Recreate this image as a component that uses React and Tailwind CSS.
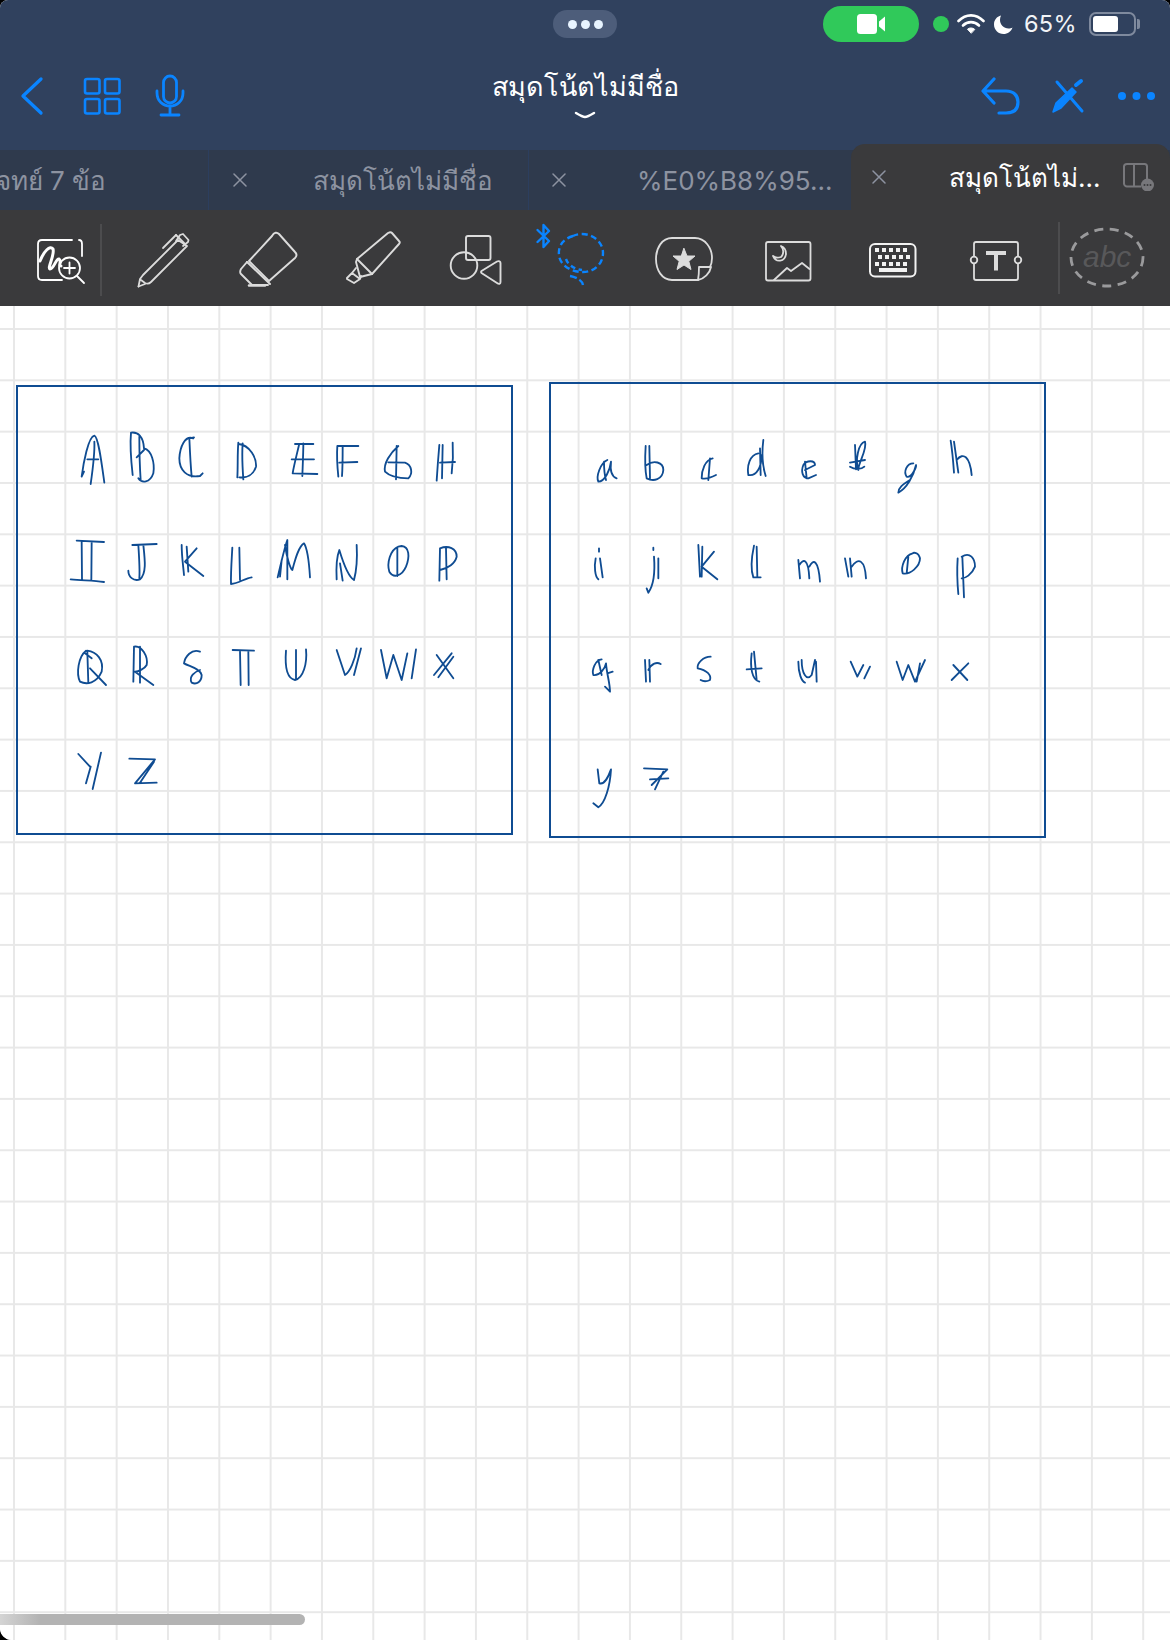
import React from "react";

const Ic = ({ x, y, w, h, className = "", children }) => (
  <svg viewBox={`${x} ${y} ${w} ${h}`} width={w} height={h} className={"block shrink-0 " + className} fill="none" strokeLinecap="round" strokeLinejoin="round">
    {children}
  </svg>
);

const TabX = ({ c = "#8d93a1" }) => (
  <svg viewBox="0 0 14 14" width="14" height="14" className="block shrink-0" fill="none" stroke={c} strokeWidth="1.5" strokeLinecap="round">
    <path d="M1 1L13 13M13 1L1 13" />
  </svg>
);

const UPPER = [
  "M245 320C250 280 265 200 283 197C295 200 305 280 313 338M272 342C278 300 285 250 283 215M262 268L295 268M245 320L252 305",
  "M398 315C393 270 390 220 393 188C415 185 430 200 432 235C455 240 465 280 460 310C450 340 425 340 415 325M418 200C418 250 420 300 422 330M410 262L432 240",
  "M580 205C555 195 540 230 538 265C538 300 560 325 600 318L608 310M568 205C570 250 572 290 575 320M568 205L582 202",
  "M715 218C712 250 714 290 712 322M728 220C725 260 728 300 730 328M715 222C750 225 770 265 768 290C760 315 740 325 718 322",
  "M885 222L940 222M897 225C890 255 882 285 878 310L952 312M875 268L942 268M910 220C910 250 908 290 907 318",
  "M1015 320C1012 290 1010 255 1012 228L1075 228M1028 228C1028 260 1028 290 1026 318M1018 278L1072 276",
  "M1195 228C1170 250 1150 280 1155 305C1170 320 1200 325 1225 325C1240 310 1235 285 1215 278L1165 277M1190 228L1188 328",
  "M1318 225C1315 260 1312 300 1310 332M1328 225L1326 325M1358 218C1360 250 1358 285 1355 310M1320 278L1365 276",
  "M230 512L312 516M245 515L246 628M275 515L274 630M212 628C250 632 280 630 312 636",
  "M397 525L470 522M430 525C435 570 440 610 420 628C400 635 385 620 385 602M415 525C418 570 420 600 418 625",
  "M545 525C545 560 550 590 552 615M560 530L565 605M590 535L555 575L610 618",
  "M697 533C695 570 692 610 693 642C715 640 735 625 755 622M718 533L720 630",
  "M833 622C845 570 855 530 862 510L862 628M855 525C860 560 870 595 877 600C885 570 895 530 912 520C925 540 928 590 930 622M845 570L840 620",
  "M1010 628C1008 590 1010 560 1018 540C1030 580 1045 620 1062 630C1070 600 1072 560 1070 525M1020 580L1028 632",
  "M1195 530C1170 540 1160 580 1168 605C1180 625 1205 620 1218 590C1230 560 1228 530 1205 528L1195 530M1192 535L1192 618",
  "M1318 632L1320 535C1345 525 1370 535 1370 560C1365 580 1345 595 1320 600M1338 535L1340 628",
  "M258 842C235 860 228 910 240 935C260 945 290 940 305 905C312 870 290 845 262 842M262 845L265 940M270 895L318 945M255 850L275 865",
  "M400 935L402 830C425 825 445 860 440 885C435 895 415 905 405 905L460 945M420 830L420 938",
  "M600 845C575 835 555 860 552 880C570 890 600 895 605 915C605 935 590 945 575 938C565 920 585 905 600 900",
  "M698 840L762 842M720 842L722 945M745 842L746 945",
  "M858 842C855 880 858 925 885 930C910 925 922 880 918 838M888 840L888 928",
  "M1010 840L1035 915C1050 905 1065 870 1070 835M1083 835L1062 915",
  "M1143 840L1160 925L1180 855L1205 930L1222 850M1248 838L1235 925",
  "M1310 855L1360 925M1355 850L1302 915M1360 860L1315 922",
  "M235 1152L270 1190M272 1190L258 1240M303 1148L278 1257",
  "M388 1166L465 1168L405 1240L470 1238M462 1175L420 1238",
];

const LOWER = [
  "M232 270C210 280 198 320 205 335C225 335 240 300 243 275C240 300 245 320 260 325M222 275C222 300 225 320 228 330",
  "M347 228C345 260 345 300 350 325C370 335 398 330 400 300C400 275 370 270 350 285M358 228L360 325",
  "M548 265C525 270 515 300 515 325C530 328 545 322 558 315M540 265L535 330",
  "M685 250C660 255 650 285 655 315C680 320 695 290 695 255M700 210C695 250 698 290 707 318M690 235L692 315",
  "M825 300L855 285C855 270 830 270 820 285C812 305 818 325 835 325L858 315M825 275L830 325",
  "M985 300C975 270 985 220 1005 215C1012 235 990 270 985 295M960 278L1005 270M960 290C975 300 995 298 1003 290M975 225L978 298",
  "M1150 280C1130 280 1120 305 1130 320C1145 325 1160 290 1158 285C1150 320 1130 355 1105 368C1105 350 1125 340 1140 330",
  "M1262 212C1268 250 1270 280 1272 308M1272 215L1285 308M1280 270C1300 245 1320 260 1325 315",
  "M197 565C192 590 195 620 205 628M210 565L218 622M207 535L207 545",
  "M370 533L370 540M372 560C375 600 375 640 355 668L350 655M385 565L385 625",
  "M505 525L510 620M517 530L515 620M552 545L515 590L562 628",
  "M672 527C665 560 662 600 670 622L692 622M680 530L682 620",
  "M805 570L810 625M808 585C820 565 835 565 838 625M838 590C850 565 865 570 870 635",
  "M945 565L955 620M960 565L965 620M965 590C985 560 1005 570 1008 625",
  "M1148 550C1125 555 1112 590 1118 610C1140 615 1170 590 1170 565C1165 545 1150 548 1148 550M1135 560L1130 610",
  "M1283 565C1280 610 1283 650 1285 672M1297 560L1302 682M1295 560C1320 545 1335 565 1335 590C1325 615 1305 625 1295 625",
  "M215 868C195 870 185 900 190 915C210 918 225 895 228 880C230 910 240 940 240 965L225 950M205 870L215 915M232 910L248 905",
  "M345 870L348 935M358 870L360 935M355 900C365 880 380 875 392 882",
  "M542 860C520 860 500 880 503 895C530 900 545 915 540 930C530 935 520 935 512 930",
  "M665 850C660 890 665 930 688 935M672 845L680 930M650 898L695 895",
  "M805 875C805 910 815 935 825 938M815 870C815 910 830 935 845 915L855 870M858 875L860 935",
  "M962 875L982 920L1000 885M1020 890L1003 925",
  "M1100 875L1118 930L1135 885L1155 935L1185 870M1170 880L1160 935",
  "M1270 885L1312 930M1315 880L1270 925M1305 890L1265 930",
  "M203 1198L208 1240C225 1245 235 1220 243 1198C240 1250 225 1300 205 1312L190 1300",
  "M342 1195L412 1198L365 1245M360 1228L415 1225M400 1205L375 1258",
];

const Ink = ({ paths, className }) => (
  <svg viewBox="0 0 1560 1440" width="520" height="480" className={"absolute block " + className} fill="none" stroke="#0f4c92" strokeWidth="5.5" strokeLinecap="round" strokeLinejoin="round">
    {paths.map((d, i) => (
      <path key={i} d={d} />
    ))}
  </svg>
);

const FONT = "font-['Inter','Noto_Sans','DejaVu_Sans',sans-serif]";
const LIGHT = "#dcdcdc";
const BLUE = "#0a84ff";

export default function App() {
  return (
    <div className="w-[1170px] h-[1640px] bg-black overflow-hidden">
      <div className={"w-full h-full flex flex-col overflow-hidden rounded-tl-[8px] rounded-tr-[8px] rounded-bl-[12px] bg-white " + FONT}>
        {/* Header */}
        <header className="bg-[#30415e] h-[150px] shrink-0">
          <div className="h-[48px] flex items-center pl-[553px]">
            <div className="w-[64px] h-[28px] rounded-full bg-[#4d5d7a] flex items-center justify-center gap-[4px]">
              <span className="w-[9px] h-[9px] rounded-full bg-[#e8f4ff]" />
              <span className="w-[9px] h-[9px] rounded-full bg-[#e8f4ff]" />
              <span className="w-[9px] h-[9px] rounded-full bg-[#e8f4ff]" />
            </div>
            <div className="ml-[206px] w-[96px] h-[36px] rounded-full bg-[#30c95a] flex items-center justify-center">
              <svg viewBox="0 0 29 20" width="29" height="20" className="block" fill="#fff">
                <rect x="0" y="0" width="20" height="20" rx="3.5" />
                <path d="M22 7.5L28 2.5V17.5L22 12.5Z" />
              </svg>
            </div>
            <span className="ml-[14px] w-[16px] h-[16px] rounded-full bg-[#30c95a]" />
            <svg viewBox="0 0 28 20" width="28" height="20" className="block ml-[8px]" fill="none" stroke="#fff" strokeWidth="2.6" strokeLinecap="round">
              <path d="M1.5 7C9 -0.5 19 -0.5 26.5 7" />
              <path d="M6 11.5C10.500 7 17.500 7 22 11.500" />
              <path d="M14 19L10.500 15.200C12.500 13.500 15.500 13.500 17.500 15.200Z" fill="#fff" strokeWidth="1" strokeLinejoin="round" />
            </svg>
            <svg viewBox="0 0 19 19" width="19" height="19" className="block ml-[9px]" fill="#fff">
              <path d="M7 0.500C2.800 1.500 0 5 0 9.500C0 14.800 4.200 19 9.500 19C13.700 19 17.200 16.500 18.500 12.500C17.500 13.200 16 13.600 14.500 13.600C9.800 13.600 6 9.800 6 5.100C6 3.500 6.300 1.900 7 0.500Z" />
            </svg>
            <span className="ml-[11px] text-[23.500px] leading-none text-[#f2f4f7] font-normal tracking-[0.3px]">65%</span>
            <div className="ml-[12px] relative w-[47px] h-[24px] rounded-[7px] border-2 border-[#7f8a9e] p-[2px]">
              <div className="w-[25px] h-full rounded-[3px] bg-white" />
              <span className="absolute -right-[6px] top-[5px] w-[3px] h-[10px] rounded-r-[2px] bg-[#7f8a9e]" />
            </div>
          </div>
          <div className="h-[102px] flex">
            <Ic x={0} y={48} w={200} h={102}>
              <path d="M41 79L23 96L41 113" stroke={BLUE} strokeWidth="3.300" />
              <g stroke={BLUE} strokeWidth="2.600">
                <rect x="85" y="79" width="14.500" height="14.500" rx="2" />
                <rect x="105" y="79" width="14.500" height="14.500" rx="2" />
                <rect x="85" y="99" width="14.500" height="14.500" rx="2" />
                <rect x="105" y="99" width="14.500" height="14.500" rx="2" />
                <rect x="163.500" y="76" width="13" height="27" rx="6.500" strokeWidth="2.800" />
                <path d="M157 91V93C157 101 163 106 170 106C177 106 183 101 183 93V91M170 106V114.500M161 115H179" strokeWidth="2.800" />
              </g>
            </Ic>
            <div className="flex-1 flex flex-col items-center">
              <div className="mt-[19px] text-[27px] leading-[40px] text-white">สมุดโน้ตไม่มีชื่อ</div>
              <svg viewBox="0 0 22 8" width="22" height="8" className="block mt-[4px]" fill="none" stroke="#fff" strokeWidth="2.500" strokeLinecap="round">
                <path d="M2 2C7 5 9 6 11 6C13 6 15 5 20 2" />
              </svg>
            </div>
            <Ic x={970} y={48} w={200} h={102}>
              <path d="M994 79L983 91L994 103M984 91H1006C1014 91 1018 96 1018 102C1018 109 1014 113 1006 113H999" stroke={BLUE} strokeWidth="3.200" />
              <path d="M1057 82L1082 111" stroke={BLUE} strokeWidth="3" />
              <path d="M1053 112L1056 103L1072 88L1076 92L1061 108Z" fill={BLUE} stroke={BLUE} strokeWidth="1.500" />
              <path d="M1076 85L1081 81" stroke={BLUE} strokeWidth="4" />
              <circle cx="1122" cy="96" r="4" fill={BLUE} />
              <circle cx="1136.500" cy="96" r="4" fill={BLUE} />
              <circle cx="1151" cy="96" r="4" fill={BLUE} />
            </Ic>
          </div>
        </header>

        {/* Tabs */}
        <div className="h-[60px] shrink-0 flex bg-[#2f3a4d] text-[26px] text-[#8d93a1] relative z-10">
          <div className="w-[209px] border-r border-[#2c3e5e] overflow-hidden flex items-center justify-end pr-[102px]">
            <span className="whitespace-nowrap">โจทย์ 7 ข้อ</span>
          </div>
          <div className="w-[320px] border-r border-[#2c3e5e] flex items-center pl-[24px]">
            <TabX />
            <span className="ml-[66px] whitespace-nowrap">สมุดโน้ตไม่มีชื่อ</span>
          </div>
          <div className="w-[322px] flex items-center pl-[23px]">
            <TabX />
            <span className="ml-[71px] whitespace-nowrap">%E0%B8%95...</span>
          </div>
          <div className="w-[319px] h-[66px] -mt-[6px] rounded-t-[14px] bg-[#3a3a3c] flex items-center pl-[21px]">
            <TabX />
            <span className="ml-[63px] whitespace-nowrap text-white">สมุดโน้ตไม่...</span>
            <svg viewBox="0 0 32 28" width="32" height="28" className="block ml-[23px]" fill="none">
              <path d="M24 17V3.500C24 2 23 1 21.500 1H4C2.500 1 1 2 1 3.500V20.500C1 22 2.500 23.500 4 23.500H18M11 1V23.500" stroke="#77777b" strokeWidth="2" />
              <circle cx="24.500" cy="22" r="6.500" fill="#77777b" />
              <circle cx="21.500" cy="22" r="1" fill="#3a3a3c" />
              <circle cx="24.500" cy="22" r="1" fill="#3a3a3c" />
              <circle cx="27.500" cy="22" r="1" fill="#3a3a3c" />
            </svg>
          </div>
        </div>

        {/* Toolbar */}
        <div className="h-[96px] shrink-0 bg-[#3a3a3c] flex items-start pl-[36px]">
          <Ic x={36} y={210} w={50} h={96}>
            <path d="M72 240H42C39 240 38 241 38 244V276C38 279 39 280 42 280H62M79 240C81 240 82 242 82 244V256" stroke="#fff" strokeWidth="1.800" />
            <path d="M40 261C44 251 50 245 53 249C55 255 47 268 50 269C54 269 56 258 59 259C62 261 58 266 61 266" stroke="#fff" strokeWidth="3" />
            <circle cx="69.500" cy="268" r="10.500" stroke="#fff" strokeWidth="1.800" />
            <path d="M69.500 262.500V273.500M64 268H75M77 276L84 283" stroke="#fff" strokeWidth="1.800" />
          </Ic>
          <div className="ml-[14px] mt-[14px] w-[2px] h-[72px] bg-[#4c4c4e]" />
          <Ic x={136} y={210} w={56} h={96} className="ml-[34px]">
            <g stroke={LIGHT} strokeWidth="1.800">
              <path d="M138.500 286.500L140 279L143 275L178 240L187 246L151 282C149 284 147 284 145 283L141 280" />
              <path d="M138.500 286.500L145 284" />
              <path d="M163 248L176 235" />
              <path d="M176 241L180 235L183 234L188.500 240L188 242L183 246" />
              <path d="M176 235L185 244" />
            </g>
          </Ic>
          <Ic x={238} y={210} w={62} h={96} className="ml-[46px]">
            <g stroke={LIGHT} strokeWidth="1.900">
              <path d="M249 261L272 236C274 232 277 232 279 234L295 252C297 254 297 256 295 258L269 281Z" />
              <path d="M247 262L270 284" />
              <path d="M247 262L241 269C240 271 240 273 241 274L252 285H268" />
              <path d="M249 285.500H265" strokeWidth="2.500" />
            </g>
          </Ic>
          <Ic x={344} y={210} w={58} h={96} className="ml-[44px]">
            <g stroke={LIGHT} strokeWidth="1.900">
              <path d="M357 259L388 233C390 232 391 232 392 233L399 241C400 242 400 243 399 244L372 274L360 277L356 262Z" />
              <path d="M357 259L372 274" />
              <path d="M356 268L352 273L360 279M352 273L347 278C347 279 347 279 347 279L354 283L360 279L361 276" />
            </g>
          </Ic>
          <Ic x={448} y={210} w={56} h={96} className="ml-[46px]">
            <g stroke={LIGHT} strokeWidth="1.900">
              <rect x="466" y="236" width="24.500" height="24" rx="2" />
              <circle cx="464" cy="265.500" r="13.300" />
              <path d="M481.500 271L497 261.500C499 260.500 500.500 261.500 500.500 263V282C500.500 284 499 284.500 497 283L481.500 273C481 272.500 481 271.500 481.500 271Z" />
            </g>
          </Ic>
          <Ic x={535} y={210} w={71} h={96} className="ml-[31px]">
            <path d="M537.500 230L549 241L543.500 247V225L549 231L537.500 242" stroke={BLUE} strokeWidth="2.400" />
            <path d="M573 236C563 239 558 246 559 255C560 266 572 272 583 272C594 272 603 264 603 253C603 242 593 234 582 234C578 234 575 235 573 236" stroke={BLUE} strokeWidth="2.400" strokeDasharray="6 3.500" strokeLinecap="butt" />
            <path d="M566 259C568 265 574 269 582 270" stroke={BLUE} strokeWidth="2.400" strokeDasharray="5 3.500" strokeLinecap="butt" />
            <path d="M570 276C576 277 582 280 583 285" stroke={BLUE} strokeWidth="2.400" strokeDasharray="7 3" strokeLinecap="butt" />
          </Ic>
          <Ic x={653} y={210} w={62} h={96} className="ml-[47px]">
            <g stroke={LIGHT} strokeWidth="1.800">
              <path d="M698 280H672C662 280 656 270 656 259C656 248 662 238 672 238H695C705 238 712 248 712 258C712 262 711 265 710 267" />
              <path d="M699 267H711C710 273 704 279 698 280C699 275 699 271 699 267Z" />
            </g>
            <path d="M684 248.500L687 256H695L688.800 261.300L691 269.500L684 265L677 269.500L679.200 261.300L673 256H681Z" fill={LIGHT} stroke={LIGHT} strokeWidth="1" />
          </Ic>
          <Ic x={763} y={210} w={50} h={96} className="ml-[48px]">
            <g stroke={LIGHT} strokeWidth="1.800">
              <rect x="766" y="242" width="44.500" height="38.500" rx="2" />
              <path d="M774 280L787 268L791 271L802 263L809.500 269" />
              <path d="M781 246C784 249 784 254 781 257C778 258 775 258 773 256C776 263 785 262 786 254C786 250 784 247 781 246Z" />
            </g>
          </Ic>
          <Ic x={867} y={210} w={51} h={96} className="ml-[54px]">
            <rect x="870" y="244" width="45.500" height="32.500" rx="5" stroke="#f2f2f2" strokeWidth="2" />
            <g fill="#f2f2f2">
              <rect x="875" y="248" width="4" height="4" /><rect x="882" y="248" width="4" height="4" /><rect x="889" y="248" width="4" height="4" /><rect x="896" y="248" width="4" height="4" /><rect x="903" y="248" width="4" height="4" />
              <rect x="878" y="255" width="4" height="4" /><rect x="885" y="255" width="4" height="4" /><rect x="892" y="255" width="4" height="4" /><rect x="899" y="255" width="4" height="4" /><rect x="906" y="255" width="4" height="4" />
              <rect x="875" y="262" width="4" height="4" /><rect x="882" y="262" width="4" height="4" /><rect x="889" y="262" width="4" height="4" /><rect x="896" y="262" width="4" height="4" /><rect x="903" y="262" width="4" height="4" />
              <rect x="879" y="268" width="28" height="4" />
            </g>
          </Ic>
          <Ic x={968} y={210} w={56} h={96} className="ml-[50px]">
            <path d="M974 256V244C974 243 975 242 976 242H1016C1017 242 1018 243 1018 244V256M974 264V278C974 279 975 280 976 280H1016C1017 280 1018 279 1018 278V264" stroke={LIGHT} strokeWidth="1.800" />
            <circle cx="974" cy="260" r="3.300" stroke={LIGHT} strokeWidth="1.800" />
            <circle cx="1018" cy="260" r="3.300" stroke={LIGHT} strokeWidth="1.800" />
            <path d="M986 253H1006M996 253V270.500" stroke={LIGHT} strokeWidth="4" strokeLinecap="butt" />
          </Ic>
          <div className="ml-[34px] mt-[12px] w-[2px] h-[72px] bg-[#4c4c4e]" />
          <Ic x={1066} y={210} w={82} h={96} className="ml-[6px]">
            <ellipse cx="1107" cy="257.500" rx="36" ry="28.500" stroke="#9a9a9c" strokeWidth="2.800" strokeDasharray="9 6.500" strokeLinecap="butt" />
            <text x="1083" y="267" fontSize="30" fontStyle="italic" fontFamily="Liberation Sans" fill="#58585a">abc</text>
          </Ic>
        </div>

        {/* Canvas */}
        <main className="relative flex-1 bg-white bg-[linear-gradient(to_right,#e8e8e8_2px,transparent_2px),linear-gradient(to_bottom,#e8e8e8_2px,transparent_2px)] bg-size-[51.33px_51.33px] bg-position-[13px_22px]">
          <div className="absolute left-[16px] top-[79px] w-[497px] h-[450px] border-2 border-[#0f4c92]" />
          <div className="absolute left-[549px] top-[76px] w-[497px] h-[456px] border-2 border-[#0f4c92]" />
          <Ink paths={UPPER} className="left-0 top-[64px]" />
          <Ink paths={LOWER} className="left-[530px] top-[64px]" />
          <div className="absolute left-0 top-[1308px] w-[305px] h-[11px] rounded-r-full bg-[linear-gradient(to_right,#d4d4d4,#b3b3b3_40px)]" />
        </main>
      </div>
    </div>
  );
}
